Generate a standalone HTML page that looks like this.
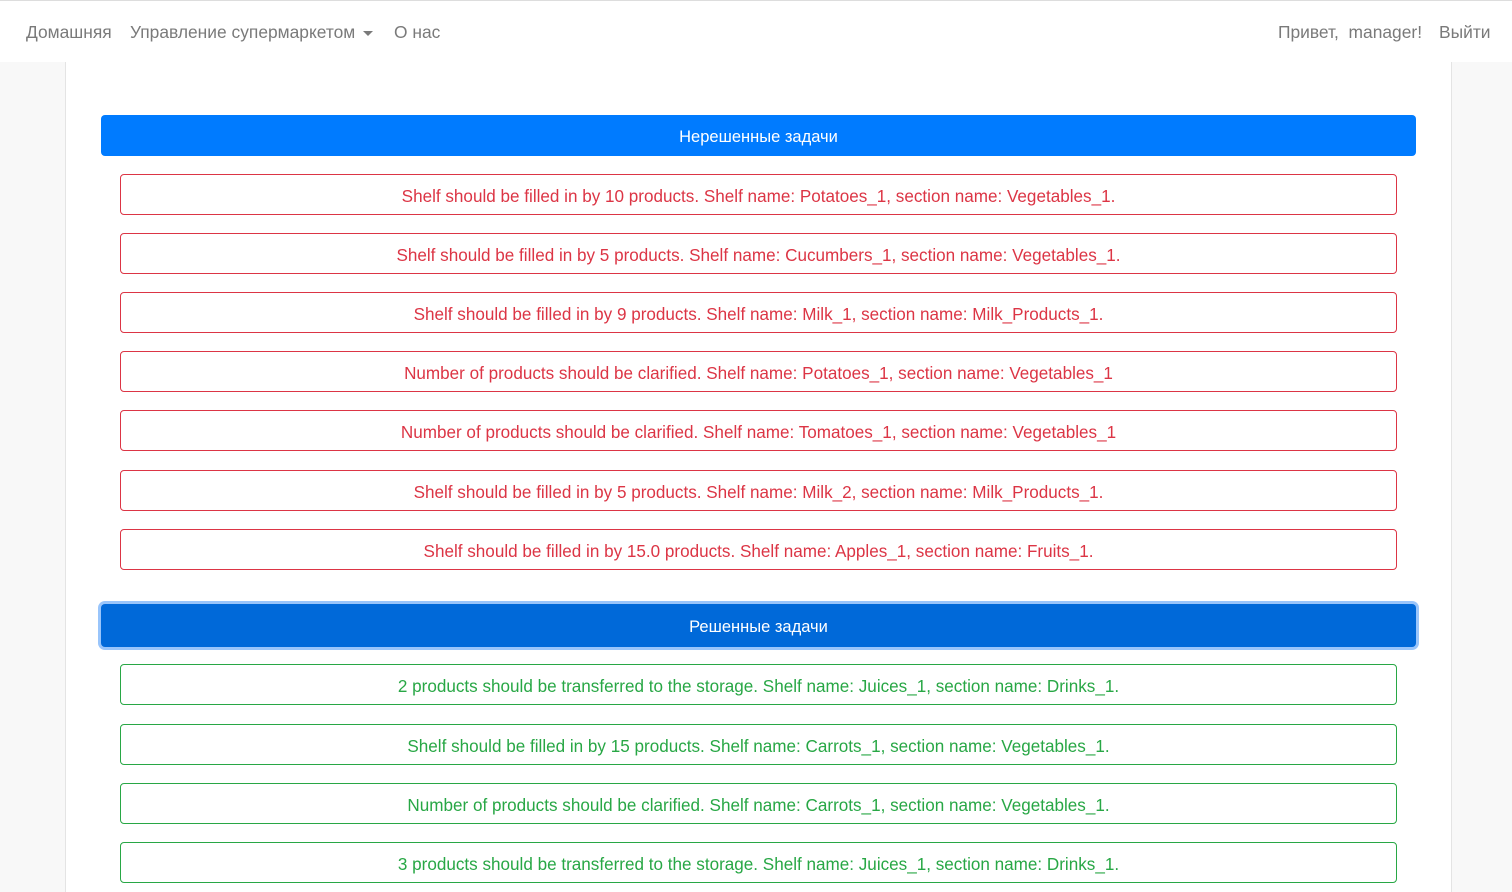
<!DOCTYPE html>
<html><head><meta charset="utf-8"><style>
*{box-sizing:border-box;margin:0;padding:0}
body{width:1512px;height:892px;overflow:hidden;background:#f8f8f8;font-family:"Liberation Sans",sans-serif;position:relative}
.nav{position:absolute;left:0;top:0;width:1512px;height:62px;background:#fff;border-top:1px solid #ddd;font-size:17.4px;color:#7a7a7a}
.nav span{position:absolute;top:21px}
.caret{display:inline-block;border-top:5px solid #7a7a7a;border-left:5px solid transparent;border-right:5px solid transparent;vertical-align:middle;margin-left:8px}
.cont{position:absolute;left:65px;top:62px;width:1387px;height:830px;background:#fff;border-left:1px solid #e4e4e4;border-right:1px solid #e4e4e4}
.btn{position:absolute;left:101px;width:1315px;height:41px;background:#007bff;color:#fff;border-radius:4px;text-align:center;font-size:16.5px;line-height:45px}
.btn2{top:604px;height:43px;line-height:47px;background:#0069d9;box-shadow:0 0 0 3px #99c5fb}
.t{position:absolute;left:120px;width:1277px;height:41px;border:1px solid #dc3545;border-radius:4px;color:#dc3545;text-align:center;font-size:17.1px;line-height:43px;background:#fff}
.g{border-color:#28a745;color:#28a745}
</style></head><body>
<div class="nav">
<span style="left:26px">Домашняя</span>
<span style="left:130px">Управление супермаркетом<i class="caret"></i></span>
<span style="left:394px">О нас</span>
<span style="left:1278px">Привет,&nbsp; manager!</span>
<span style="left:1439px">Выйти</span>
</div>
<div class="cont"></div>
<div class="btn" style="top:115px">Нерешенные задачи</div>
<div class="t" style="top:174px">Shelf should be filled in by 10 products. Shelf name: Potatoes_1, section name: Vegetables_1.</div>
<div class="t" style="top:233px">Shelf should be filled in by 5 products. Shelf name: Cucumbers_1, section name: Vegetables_1.</div>
<div class="t" style="top:292px">Shelf should be filled in by 9 products. Shelf name: Milk_1, section name: Milk_Products_1.</div>
<div class="t" style="top:351px">Number of products should be clarified. Shelf name: Potatoes_1, section name: Vegetables_1</div>
<div class="t" style="top:410px">Number of products should be clarified. Shelf name: Tomatoes_1, section name: Vegetables_1</div>
<div class="t" style="top:470px">Shelf should be filled in by 5 products. Shelf name: Milk_2, section name: Milk_Products_1.</div>
<div class="t" style="top:529px">Shelf should be filled in by 15.0 products. Shelf name: Apples_1, section name: Fruits_1.</div>
<div class="btn btn2">Решенные задачи</div>
<div class="t g" style="top:664px">2 products should be transferred to the storage. Shelf name: Juices_1, section name: Drinks_1.</div>
<div class="t g" style="top:724px">Shelf should be filled in by 15 products. Shelf name: Carrots_1, section name: Vegetables_1.</div>
<div class="t g" style="top:783px">Number of products should be clarified. Shelf name: Carrots_1, section name: Vegetables_1.</div>
<div class="t g" style="top:842px">3 products should be transferred to the storage. Shelf name: Juices_1, section name: Drinks_1.</div>
</body></html>
